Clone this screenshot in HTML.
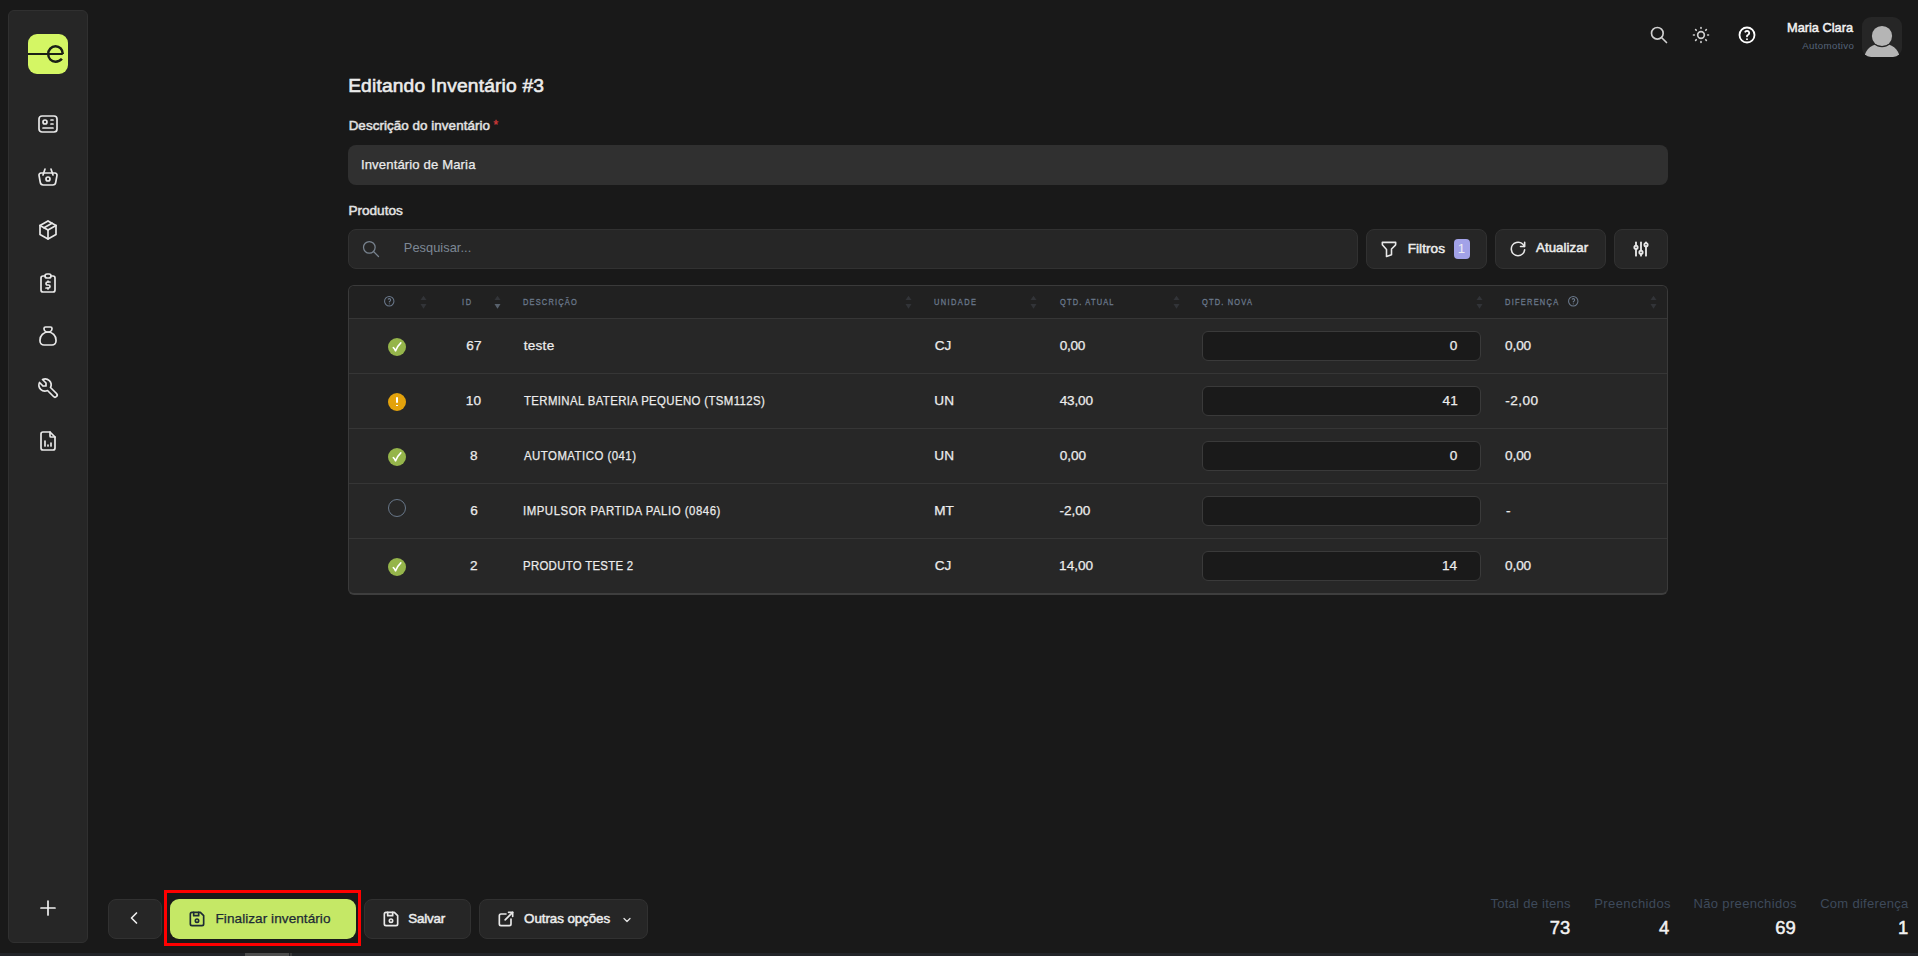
<!DOCTYPE html>
<html><head><meta charset="utf-8">
<style>
*{box-sizing:border-box;margin:0;padding:0}
html,body{width:1918px;height:956px;overflow:hidden;background:#191919;font-family:"Liberation Sans",sans-serif;color:#e6e6e6}
.abs{position:absolute}
svg.t{fill:none;stroke:currentColor;stroke-linecap:round;stroke-linejoin:round}
.txt{white-space:nowrap;line-height:1}
.btn{background:#262626;border:1px solid #313131;border-radius:8px}
</style></head><body>

<div class="abs" style="left:8px;top:10px;width:80px;height:933px;background:#262626;border:1px solid #303030;border-radius:6px"></div>
<div class="abs" style="left:28px;top:34px;width:40px;height:40px;background:#d4f664;border-radius:9px;overflow:hidden">
<svg width="40" height="40" viewBox="0 0 40 40" style="position:absolute;left:0;top:0"><path d="M0 20 H34.8" stroke="#1b2016" stroke-width="2.1" fill="none"/><path d="M34.8 20 C34.8 15.5 31.6 12.3 27.5 12.3 C23.3 12.3 20.2 15.7 20.2 20 C20.2 24.4 23.3 27.7 27.5 27.7 C30.2 27.7 32.4 26.6 33.9 24.8" stroke="#1b2016" stroke-width="2.5" fill="none"/></svg></div>
<svg class="abs t" style="left:36px;top:112px;width:24px;height:24px;color:#e8e8e8;" viewBox="0 0 24 24" stroke-width="1.7"><path d="M3 7a3 3 0 0 1 3 -3h12a3 3 0 0 1 3 3v10a3 3 0 0 1 -3 3h-12a3 3 0 0 1 -3 -3z"/><path d="M7 10a2 2 0 1 0 4 0a2 2 0 1 0 -4 0"/><path d="M15 8l2 0"/><path d="M15 12l2 0"/><path d="M7 16l10 0"/></svg>
<svg class="abs t" style="left:36px;top:165px;width:24px;height:24px;color:#e8e8e8;" viewBox="0 0 24 24" stroke-width="1.7"><path d="M10 14a2 2 0 1 0 4 0a2 2 0 0 0 -4 0"/><path d="M5.001 8h13.999a2 2 0 0 1 1.977 2.304l-1.255 7.152a3 3 0 0 1 -2.966 2.544h-9.512a3 3 0 0 1 -2.965 -2.544l-1.255 -7.152a2 2 0 0 1 1.977 -2.304z"/><path d="M17 10l-2 -6"/><path d="M7 10l2 -6"/></svg>
<svg class="abs t" style="left:36px;top:218px;width:24px;height:24px;color:#e8e8e8;" viewBox="0 0 24 24" stroke-width="1.7"><path d="M12 3l8 4.5l0 9l-8 4.5l-8 -4.5l0 -9l8 -4.5"/><path d="M12 12l8 -4.5"/><path d="M12 12l0 9"/><path d="M12 12l-8 -4.5"/><path d="M16 5.25l-8 4.5"/></svg>
<svg class="abs t" style="left:36px;top:271px;width:24px;height:24px;color:#e8e8e8;" viewBox="0 0 24 24" stroke-width="1.7"><path d="M9 5h-2a2 2 0 0 0 -2 2v12a2 2 0 0 0 2 2h10a2 2 0 0 0 2 -2v-12a2 2 0 0 0 -2 -2h-2"/><path d="M9 5a2 2 0 0 1 2 -2h2a2 2 0 0 1 2 2v0a2 2 0 0 1 -2 2h-2a2 2 0 0 1 -2 -2z"/><path d="M14 11h-2.5a1.5 1.5 0 0 0 0 3h1a1.5 1.5 0 0 1 0 3h-2.5"/><path d="M12 17v1m0 -8v1"/></svg>
<svg class="abs t" style="left:36px;top:324px;width:24px;height:24px;color:#e8e8e8;" viewBox="0 0 24 24" stroke-width="1.7"><path d="M9.5 3h5a1.5 1.5 0 0 1 1.5 1.5a3.5 3.5 0 0 1 -3.5 3.5h-1a3.5 3.5 0 0 1 -3.5 -3.5a1.5 1.5 0 0 1 1.5 -1.5z"/><path d="M4 17v-1a8 8 0 1 1 16 0v1a4 4 0 0 1 -4 4h-8a4 4 0 0 1 -4 -4z"/></svg>
<svg class="abs t" style="left:36px;top:376px;width:24px;height:24px;color:#e8e8e8;" viewBox="0 0 24 24" stroke-width="1.7"><path d="M7 10h3v-3l-3.5 -3.5a6 6 0 0 1 8 8l6 6a2 2 0 0 1 -3 3l-6 -6a6 6 0 0 1 -8 -8l3.5 3.5"/></svg>
<svg class="abs t" style="left:36px;top:429px;width:24px;height:24px;color:#e8e8e8;" viewBox="0 0 24 24" stroke-width="1.7"><path d="M14 3v4a1 1 0 0 0 1 1h4"/><path d="M17 21h-10a2 2 0 0 1 -2 -2v-14a2 2 0 0 1 2 -2h7l5 5v11a2 2 0 0 1 -2 2z"/><path d="M9 17l0 -5"/><path d="M12 17l0 -1"/><path d="M15 17l0 -3"/></svg>
<svg class="abs t" style="left:36px;top:896px;width:24px;height:24px;color:#f0f0f0;" viewBox="0 0 24 24" stroke-width="1.7"><path d="M12 5l0 14"/><path d="M5 12l14 0"/></svg>
<svg class="abs t" style="left:1649px;top:25px;width:20px;height:20px;color:#d0d0d0;" viewBox="0 0 24 24" stroke-width="2"><path d="M3 10a7 7 0 1 0 14 0a7 7 0 1 0 -14 0"/><path d="M21 21l-6 -6"/></svg>
<svg class="abs t" style="left:1691px;top:25px;width:20px;height:20px;color:#d0d0d0;" viewBox="0 0 24 24" stroke-width="2"><path d="M8 12a4 4 0 1 0 8 0a4 4 0 1 0 -8 0"/><path d="M3 12h1m8 -9v1m8 8h1m-9 8v1m-6.4 -15.4l.7 .7m12.1 -.7l-.7 .7m0 11.4l.7 .7m-12.1 -.7l-.7 .7"/></svg>
<svg class="abs t" style="left:1737px;top:25px;width:20px;height:20px;color:#ffffff;" viewBox="0 0 24 24" stroke-width="2.2"><path d="M3 12a9 9 0 1 0 18 0a9 9 0 1 0 -18 0"/><path d="M12 17l0 .01"/><path d="M12 13.5a1.5 1.5 0 0 1 1 -1.5a2.6 2.6 0 1 0 -3 -4"/></svg>
<div class="abs" style="left:1862px;top:17px;width:40px;height:40px;background:#262626;border-radius:9px;overflow:hidden">
<svg width="40" height="40" viewBox="0 0 40 40" style="position:absolute;left:0;top:0"><path d="M2.5 40 C3.5 32 10 26.5 20 26.5 C30 26.5 36.5 32 37.5 40 Z" fill="#b5b5b5"/><circle cx="20" cy="19" r="11.3" fill="#262626"/><circle cx="20" cy="19" r="10.1" fill="#b5b5b5"/></svg></div>
<div class="abs" style="left:348px;top:145px;width:1320px;height:40px;background:#303030;border-radius:8px"></div>
<div class="abs txt" style="left:493.5px;top:119px;font-size:12px;color:#d53b3b;-webkit-text-stroke:0.3px #d53b3b">*</div>
<div class="abs btn" style="left:348px;top:229px;width:1010px;height:40px"></div>
<svg class="abs t" style="left:361px;top:239px;width:20px;height:20px;color:#78838f;" viewBox="0 0 24 24" stroke-width="1.5"><path d="M3 10a7 7 0 1 0 14 0a7 7 0 1 0 -14 0"/><path d="M21 21l-6 -6"/></svg>
<div class="abs btn" style="left:1366px;top:229px;width:121px;height:40px"></div>
<svg class="abs t" style="left:1379px;top:238.8px;width:20px;height:20px;color:#e8e8e8;" viewBox="0 0 24 24" stroke-width="1.9"><path d="M4 4h16v2.172a2 2 0 0 1 -.586 1.414l-4.414 4.414v7l-6 2v-8.5l-4.48 -4.928a2 2 0 0 1 -.52 -1.345v-2.227z"/></svg>
<div class="abs" style="left:1454px;top:239px;width:16px;height:20px;background:#a2a2e8;border-radius:4px"></div>
<div class="abs btn" style="left:1495px;top:229px;width:111px;height:40px"></div>
<svg class="abs t" style="left:1508px;top:238.5px;width:20px;height:20px;color:#e8e8e8;" viewBox="0 0 24 24" stroke-width="1.9"><path d="M19.933 13.041a8 8 0 1 1 -9.925 -8.788c3.899 -1 7.935 1.007 9.425 4.747"/><path d="M20 4v5h-5"/></svg>
<div class="abs btn" style="left:1614px;top:229px;width:54px;height:40px"></div>
<svg class="abs t" style="left:1630.5px;top:239px;width:20px;height:20px;color:#e8e8e8;" viewBox="0 0 24 24" stroke-width="2.2"><path d="M4 10a2 2 0 1 0 4 0a2 2 0 0 0 -4 0"/><path d="M6 4v4"/><path d="M6 12v8"/><path d="M10 16a2 2 0 1 0 4 0a2 2 0 0 0 -4 0"/><path d="M12 4v10"/><path d="M12 18v2"/><path d="M16 7a2 2 0 1 0 4 0a2 2 0 0 0 -4 0"/><path d="M18 4v1"/><path d="M18 9v11"/></svg>
<div class="abs" style="left:348px;top:285px;width:1320px;height:310px;background:#272727;border:1px solid #3a3a3a;border-bottom:2px solid #3e3e3e;border-radius:6px;overflow:hidden"><div class="abs" style="left:0;top:0;width:100%;height:32px;background:#212121"></div></div>
<div class="abs" style="left:349px;top:318px;width:1318px;height:1px;background:#363636"></div>
<div class="abs" style="left:349px;top:373px;width:1318px;height:1px;background:#363636"></div>
<div class="abs" style="left:349px;top:428px;width:1318px;height:1px;background:#363636"></div>
<div class="abs" style="left:349px;top:483px;width:1318px;height:1px;background:#363636"></div>
<div class="abs" style="left:349px;top:538px;width:1318px;height:1px;background:#363636"></div>
<svg class="abs t" style="left:383.25px;top:294.95px;width:12.5px;height:12.5px;color:#6b798c;" viewBox="0 0 24 24" stroke-width="2"><path d="M3 12a9 9 0 1 0 18 0a9 9 0 1 0 -18 0"/><path d="M12 17l0 .01"/><path d="M12 13.5a1.5 1.5 0 0 1 1 -1.5a2.6 2.6 0 1 0 -3 -4"/></svg>
<svg class="abs t" style="left:1567.35px;top:295.25px;width:12.5px;height:12.5px;color:#6b798c;" viewBox="0 0 24 24" stroke-width="2"><path d="M3 12a9 9 0 1 0 18 0a9 9 0 1 0 -18 0"/><path d="M12 17l0 .01"/><path d="M12 13.5a1.5 1.5 0 0 1 1 -1.5a2.6 2.6 0 1 0 -3 -4"/></svg>
<svg class="abs" style="left:419.5px;top:294.5px;width:7px;height:15px" viewBox="0 0 7 15"><path d="M0.5 5 L3.5 0.7 L6.5 5 Z" fill="#323438"/><path d="M0.5 9 L3.5 13.8 L6.5 9 Z" fill="#323438"/></svg>
<svg class="abs" style="left:905.0px;top:294.5px;width:7px;height:15px" viewBox="0 0 7 15"><path d="M0.5 5 L3.5 0.7 L6.5 5 Z" fill="#323438"/><path d="M0.5 9 L3.5 13.8 L6.5 9 Z" fill="#323438"/></svg>
<svg class="abs" style="left:1029.8px;top:294.5px;width:7px;height:15px" viewBox="0 0 7 15"><path d="M0.5 5 L3.5 0.7 L6.5 5 Z" fill="#323438"/><path d="M0.5 9 L3.5 13.8 L6.5 9 Z" fill="#323438"/></svg>
<svg class="abs" style="left:1172.5px;top:294.5px;width:7px;height:15px" viewBox="0 0 7 15"><path d="M0.5 5 L3.5 0.7 L6.5 5 Z" fill="#323438"/><path d="M0.5 9 L3.5 13.8 L6.5 9 Z" fill="#323438"/></svg>
<svg class="abs" style="left:1475.5px;top:294.5px;width:7px;height:15px" viewBox="0 0 7 15"><path d="M0.5 5 L3.5 0.7 L6.5 5 Z" fill="#323438"/><path d="M0.5 9 L3.5 13.8 L6.5 9 Z" fill="#323438"/></svg>
<svg class="abs" style="left:1649.8px;top:294.5px;width:7px;height:15px" viewBox="0 0 7 15"><path d="M0.5 5 L3.5 0.7 L6.5 5 Z" fill="#323438"/><path d="M0.5 9 L3.5 13.8 L6.5 9 Z" fill="#323438"/></svg>
<svg class="abs" style="left:493.5px;top:294.5px;width:7px;height:15px" viewBox="0 0 7 15"><path d="M0.5 5 L3.5 0.7 L6.5 5 Z" fill="#323438"/><path d="M0.5 9 L3.5 13.8 L6.5 9 Z" fill="#58616c"/></svg>
<div class="abs" style="left:388px;top:338px;width:18px;height:18px;border-radius:50%;background:#95b54b"></div>
<svg class="abs" style="left:388px;top:338px;width:18px;height:18px" viewBox="0 0 18 18"><path d="M5.3 9.7 C6.1 10.3 6.8 11.4 7.5 12.9 C8.5 10.1 10.4 7.2 12.8 4.9" stroke="#ffffff" stroke-width="1.6" fill="none" stroke-linecap="round" stroke-linejoin="round"/></svg>
<div class="abs" style="left:1202px;top:331px;width:279px;height:30px;background:#1a1a1a;border:1px solid #3a3a3a;border-radius:6px"></div>
<div class="abs" style="left:388px;top:393px;width:18px;height:18px;border-radius:50%;background:#e3a20c"></div>
<div class="abs" style="left:396.2px;top:397px;width:1.7px;height:6.2px;background:#fff;border-radius:1px"></div>
<div class="abs" style="left:396.2px;top:404.6px;width:1.7px;height:1.8px;background:#fff"></div>
<div class="abs" style="left:1202px;top:386px;width:279px;height:30px;background:#1a1a1a;border:1px solid #3a3a3a;border-radius:6px"></div>
<div class="abs" style="left:388px;top:448px;width:18px;height:18px;border-radius:50%;background:#95b54b"></div>
<svg class="abs" style="left:388px;top:448px;width:18px;height:18px" viewBox="0 0 18 18"><path d="M5.3 9.7 C6.1 10.3 6.8 11.4 7.5 12.9 C8.5 10.1 10.4 7.2 12.8 4.9" stroke="#ffffff" stroke-width="1.6" fill="none" stroke-linecap="round" stroke-linejoin="round"/></svg>
<div class="abs" style="left:1202px;top:441px;width:279px;height:30px;background:#1a1a1a;border:1px solid #3a3a3a;border-radius:6px"></div>
<div class="abs" style="left:388px;top:499px;width:18px;height:18px;border-radius:50%;border:1.3px solid #687789"></div>
<div class="abs" style="left:1202px;top:496px;width:279px;height:30px;background:#1a1a1a;border:1px solid #3a3a3a;border-radius:6px"></div>
<div class="abs" style="left:388px;top:558px;width:18px;height:18px;border-radius:50%;background:#95b54b"></div>
<svg class="abs" style="left:388px;top:558px;width:18px;height:18px" viewBox="0 0 18 18"><path d="M5.3 9.7 C6.1 10.3 6.8 11.4 7.5 12.9 C8.5 10.1 10.4 7.2 12.8 4.9" stroke="#ffffff" stroke-width="1.6" fill="none" stroke-linecap="round" stroke-linejoin="round"/></svg>
<div class="abs" style="left:1202px;top:551px;width:279px;height:30px;background:#1a1a1a;border:1px solid #3a3a3a;border-radius:6px"></div>
<div class="abs btn" style="left:108px;top:899px;width:54px;height:40px"></div>
<svg class="abs t" style="left:124px;top:908px;width:20px;height:20px;color:#eeeeee" viewBox="0 0 24 24" stroke-width="2"><path d="M15 6l-6 6l6 6"/></svg>
<div class="abs" style="left:170px;top:899px;width:186px;height:40px;background:#c5e866;border-radius:9px"></div>
<svg class="abs t" style="left:186.8px;top:908.5px;width:20px;height:20px;color:#1d2a35;" viewBox="0 0 24 24" stroke-width="2"><path d="M6 4h10l4 4v10a2 2 0 0 1 -2 2h-12a2 2 0 0 1 -2 -2v-12a2 2 0 0 1 2 -2"/><path d="M10 14a2 2 0 1 0 4 0a2 2 0 0 0 -4 0"/><path d="M14 4l0 4l-6 0l0 -4"/></svg>
<div class="abs" style="left:163.5px;top:889.5px;width:197px;height:56px;border:3.5px solid #ff0000"></div>
<div class="abs btn" style="left:364px;top:899px;width:107px;height:40px"></div>
<svg class="abs t" style="left:381px;top:908.5px;width:20px;height:20px;color:#e8e8e8;" viewBox="0 0 24 24" stroke-width="2"><path d="M6 4h10l4 4v10a2 2 0 0 1 -2 2h-12a2 2 0 0 1 -2 -2v-12a2 2 0 0 1 2 -2"/><path d="M10 14a2 2 0 1 0 4 0a2 2 0 0 0 -4 0"/><path d="M14 4l0 4l-6 0l0 -4"/></svg>
<div class="abs btn" style="left:479px;top:899px;width:169px;height:40px"></div>
<svg class="abs t" style="left:496px;top:908.5px;width:20px;height:20px;color:#e8e8e8;" viewBox="0 0 24 24" stroke-width="2"><path d="M12 6h-6a2 2 0 0 0 -2 2v10a2 2 0 0 0 2 2h10a2 2 0 0 0 2 -2v-6"/><path d="M11 13l9 -9"/><path d="M15 4h5v5"/></svg>
<svg class="abs t" style="left:620.5px;top:914px;width:12px;height:12px;color:#e4e4e4;" viewBox="0 0 24 24" stroke-width="2.5"><path d="M6 9l6 6l6 -6"/></svg>
<div class="abs" style="left:0;top:953px;width:1918px;height:3px;background:#222428"></div>
<div class="abs" style="left:245px;top:953px;width:44px;height:3px;background:#4d4d4d"></div>
<div class="abs" style="left:290px;top:953px;width:2px;height:3px;background:#3a3a3a"></div>
<div id="t_title" class="abs txt" style="font-size:19.2px;color:#ececec;letter-spacing:0.179px;top:75.65px;-webkit-text-stroke:0.6px #ececec;left:348.13px;">Editando Inventário #3</div>
<div id="t_lbl" class="abs txt" style="font-size:13.4px;color:#e2e2e2;letter-spacing:0.062px;top:119.46px;-webkit-text-stroke:0.5px #e2e2e2;left:348.65px;">Descrição do inventário</div>
<div id="t_inp" class="abs txt" style="font-size:13.1px;color:#ebebeb;letter-spacing:0.133px;top:157.61px;-webkit-text-stroke:0.25px #ebebeb;left:360.95px;">Inventário de Maria</div>
<div id="t_prod" class="abs txt" style="font-size:13.6px;color:#e2e2e2;letter-spacing:-0.001px;top:204.49px;-webkit-text-stroke:0.5px #e2e2e2;left:348.39px;">Produtos</div>
<div id="t_pesq" class="abs txt" style="font-size:12.8px;color:#7d8895;letter-spacing:0.046px;top:241.86px;left:403.87px;">Pesquisar...</div>
<div id="t_filt" class="abs txt" style="font-size:13.6px;color:#ececec;letter-spacing:0.040px;top:241.99px;-webkit-text-stroke:0.5px #ececec;left:1407.73px;">Filtros</div>
<div id="t_badge" class="abs txt" style="font-size:13.2px;color:#ececf4;letter-spacing:0.000px;top:241.72px;left:1457.66px;">1</div>
<div id="t_atual" class="abs txt" style="font-size:13.3px;color:#ececec;letter-spacing:0.057px;top:241.34px;-webkit-text-stroke:0.5px #ececec;left:1535.98px;">Atualizar</div>
<div id="t_name" class="abs txt" style="font-size:13.6px;color:#f2f2f2;letter-spacing:0.000px;top:21.29px;-webkit-text-stroke:0.5px #f2f2f2;transform:scaleX(0.9408);transform-origin:left center;left:1786.73px;">Maria Clara</div>
<div id="t_auto" class="abs txt" style="font-size:9.7px;color:#56647a;letter-spacing:0.366px;top:40.69px;left:1802.18px;">Automotivo</div>
<div id="h_id" class="abs txt" style="font-size:9.3px;color:#6b798c;letter-spacing:2.117px;top:297.53px;-webkit-text-stroke:0.3px #6b798c;transform:scaleX(0.8000);transform-origin:left center;left:462.37px;">ID</div>
<div id="h_desc" class="abs txt" style="font-size:9.3px;color:#6b798c;letter-spacing:1.482px;top:297.53px;-webkit-text-stroke:0.3px #6b798c;transform:scaleX(0.8000);transform-origin:left center;left:523.19px;">DESCRIÇÃO</div>
<div id="h_un" class="abs txt" style="font-size:9.3px;color:#6b798c;letter-spacing:1.749px;top:297.53px;-webkit-text-stroke:0.3px #6b798c;transform:scaleX(0.8000);transform-origin:left center;left:934.40px;">UNIDADE</div>
<div id="h_qa" class="abs txt" style="font-size:9.3px;color:#6b798c;letter-spacing:1.480px;top:297.53px;-webkit-text-stroke:0.3px #6b798c;transform:scaleX(0.8000);transform-origin:left center;left:1059.70px;">QTD. ATUAL</div>
<div id="h_qn" class="abs txt" style="font-size:9.3px;color:#6b798c;letter-spacing:1.494px;top:297.53px;-webkit-text-stroke:0.3px #6b798c;transform:scaleX(0.8000);transform-origin:left center;left:1201.76px;">QTD. NOVA</div>
<div id="h_dif" class="abs txt" style="font-size:9.3px;color:#6b798c;letter-spacing:1.582px;top:297.53px;-webkit-text-stroke:0.3px #6b798c;transform:scaleX(0.8000);transform-origin:left center;left:1505.01px;">DIFERENÇA</div>
<div id="r0_id" class="abs txt" style="font-size:13.6px;color:#ececec;letter-spacing:0.000px;top:338.59px;-webkit-text-stroke:0.25px #ececec;left:466.37px;">67</div>
<div id="r0_desc" class="abs txt" style="font-size:13.6px;color:#ececec;letter-spacing:0.281px;top:338.59px;-webkit-text-stroke:0.25px #ececec;left:523.63px;">teste</div>
<div id="r0_un" class="abs txt" style="font-size:13.6px;color:#ececec;letter-spacing:0.000px;top:338.59px;-webkit-text-stroke:0.25px #ececec;left:934.65px;">CJ</div>
<div id="r0_qa" class="abs txt" style="font-size:13.6px;color:#ececec;letter-spacing:-0.240px;top:338.59px;-webkit-text-stroke:0.25px #ececec;left:1059.63px;">0,00</div>
<div id="r0_qn" class="abs txt" style="font-size:13.6px;color:#ececec;letter-spacing:0.000px;top:338.59px;-webkit-text-stroke:0.25px #ececec;right:460.78px;">0</div>
<div id="r0_dif" class="abs txt" style="font-size:13.6px;color:#ececec;letter-spacing:-0.156px;top:338.59px;-webkit-text-stroke:0.25px #ececec;left:1505.11px;">0,00</div>
<div id="r1_id" class="abs txt" style="font-size:13.6px;color:#ececec;letter-spacing:0.000px;top:393.59px;-webkit-text-stroke:0.25px #ececec;left:465.85px;">10</div>
<div id="r1_desc" class="abs txt" style="font-size:13.6px;color:#ececec;letter-spacing:0.428px;top:393.59px;-webkit-text-stroke:0.25px #ececec;transform:scaleX(0.8400);transform-origin:left center;left:523.68px;">TERMINAL BATERIA PEQUENO (TSM112S)</div>
<div id="r1_un" class="abs txt" style="font-size:13.6px;color:#ececec;letter-spacing:0.000px;top:393.59px;-webkit-text-stroke:0.25px #ececec;left:934.33px;">UN</div>
<div id="r1_qa" class="abs txt" style="font-size:13.6px;color:#ececec;letter-spacing:-0.196px;top:393.59px;-webkit-text-stroke:0.25px #ececec;left:1059.76px;">43,00</div>
<div id="r1_qn" class="abs txt" style="font-size:13.6px;color:#ececec;letter-spacing:0.000px;top:393.59px;-webkit-text-stroke:0.25px #ececec;right:460.29px;">41</div>
<div id="r1_dif" class="abs txt" style="font-size:13.6px;color:#ececec;letter-spacing:0.478px;top:393.59px;-webkit-text-stroke:0.25px #ececec;left:1505.13px;">-2,00</div>
<div id="r2_id" class="abs txt" style="font-size:13.6px;color:#ececec;letter-spacing:0.000px;top:448.59px;-webkit-text-stroke:0.25px #ececec;left:469.94px;">8</div>
<div id="r2_desc" class="abs txt" style="font-size:13.6px;color:#ececec;letter-spacing:0.559px;top:448.59px;-webkit-text-stroke:0.25px #ececec;transform:scaleX(0.8400);transform-origin:left center;left:523.68px;">AUTOMATICO (041)</div>
<div id="r2_un" class="abs txt" style="font-size:13.6px;color:#ececec;letter-spacing:0.000px;top:448.59px;-webkit-text-stroke:0.25px #ececec;left:934.33px;">UN</div>
<div id="r2_qa" class="abs txt" style="font-size:13.6px;color:#ececec;letter-spacing:0.000px;top:448.59px;-webkit-text-stroke:0.25px #ececec;left:1059.63px;">0,00</div>
<div id="r2_qn" class="abs txt" style="font-size:13.6px;color:#ececec;letter-spacing:0.000px;top:448.59px;-webkit-text-stroke:0.25px #ececec;right:460.78px;">0</div>
<div id="r2_dif" class="abs txt" style="font-size:13.6px;color:#ececec;letter-spacing:-0.156px;top:448.59px;-webkit-text-stroke:0.25px #ececec;left:1505.11px;">0,00</div>
<div id="r3_id" class="abs txt" style="font-size:13.6px;color:#ececec;letter-spacing:0.000px;top:503.59px;-webkit-text-stroke:0.25px #ececec;left:470.19px;">6</div>
<div id="r3_desc" class="abs txt" style="font-size:13.6px;color:#ececec;letter-spacing:0.620px;top:503.59px;-webkit-text-stroke:0.25px #ececec;transform:scaleX(0.8400);transform-origin:left center;left:522.95px;">IMPULSOR PARTIDA PALIO (0846)</div>
<div id="r3_un" class="abs txt" style="font-size:13.6px;color:#ececec;letter-spacing:0.000px;top:503.59px;-webkit-text-stroke:0.25px #ececec;left:934.13px;">MT</div>
<div id="r3_qa" class="abs txt" style="font-size:13.6px;color:#ececec;letter-spacing:0.000px;top:503.59px;-webkit-text-stroke:0.25px #ececec;left:1059.41px;">-2,00</div>
<div id="r3_dif" class="abs txt" style="font-size:13.6px;color:#ececec;letter-spacing:0.000px;top:503.59px;-webkit-text-stroke:0.25px #ececec;left:1505.89px;">-</div>
<div id="r4_id" class="abs txt" style="font-size:13.6px;color:#ececec;letter-spacing:0.000px;top:558.59px;-webkit-text-stroke:0.25px #ececec;left:470.12px;">2</div>
<div id="r4_desc" class="abs txt" style="font-size:13.6px;color:#ececec;letter-spacing:0.343px;top:558.59px;-webkit-text-stroke:0.25px #ececec;transform:scaleX(0.8400);transform-origin:left center;left:522.72px;">PRODUTO TESTE 2</div>
<div id="r4_un" class="abs txt" style="font-size:13.6px;color:#ececec;letter-spacing:0.000px;top:558.59px;-webkit-text-stroke:0.25px #ececec;left:934.65px;">CJ</div>
<div id="r4_qa" class="abs txt" style="font-size:13.6px;color:#ececec;letter-spacing:0.000px;top:558.59px;-webkit-text-stroke:0.25px #ececec;left:1059.08px;">14,00</div>
<div id="r4_qn" class="abs txt" style="font-size:13.6px;color:#ececec;letter-spacing:0.000px;top:558.59px;-webkit-text-stroke:0.25px #ececec;right:461.01px;">14</div>
<div id="r4_dif" class="abs txt" style="font-size:13.6px;color:#ececec;letter-spacing:-0.156px;top:558.59px;-webkit-text-stroke:0.25px #ececec;left:1505.11px;">0,00</div>
<div id="b_fin" class="abs txt" style="font-size:13.6px;color:#1d2a35;letter-spacing:0.046px;top:911.69px;-webkit-text-stroke:0.25px #1d2a35;left:215.52px;">Finalizar inventário</div>
<div id="b_sal" class="abs txt" style="font-size:13.4px;color:#ececec;letter-spacing:-0.211px;top:911.86px;-webkit-text-stroke:0.5px #ececec;left:408.37px;">Salvar</div>
<div id="b_out" class="abs txt" style="font-size:13.4px;color:#ececec;letter-spacing:-0.090px;top:911.86px;-webkit-text-stroke:0.5px #ececec;left:524.11px;">Outras opções</div>
<div id="s_lab0" class="abs txt" style="font-size:13.0px;color:#3e4a5b;letter-spacing:0.273px;top:896.79px;right:347.15px;">Total de itens</div>
<div id="s_num0" class="abs txt" style="font-size:18.4px;color:#f2f2f2;letter-spacing:0.000px;top:918.82px;-webkit-text-stroke:0.5px #f2f2f2;right:347.83px;">73</div>
<div id="s_lab1" class="abs txt" style="font-size:13.0px;color:#3e4a5b;letter-spacing:0.404px;top:896.79px;right:247.03px;">Preenchidos</div>
<div id="s_num1" class="abs txt" style="font-size:18.4px;color:#f2f2f2;letter-spacing:0.000px;top:918.82px;-webkit-text-stroke:0.5px #f2f2f2;right:248.77px;">4</div>
<div id="s_lab2" class="abs txt" style="font-size:13.0px;color:#3e4a5b;letter-spacing:0.334px;top:896.79px;right:121.15px;">Não preenchidos</div>
<div id="s_num2" class="abs txt" style="font-size:18.4px;color:#f2f2f2;letter-spacing:0.000px;top:918.82px;-webkit-text-stroke:0.5px #f2f2f2;right:122.37px;">69</div>
<div id="s_lab3" class="abs txt" style="font-size:13.0px;color:#3e4a5b;letter-spacing:0.300px;top:896.79px;right:9.43px;">Com diferença</div>
<div id="s_num3" class="abs txt" style="font-size:18.4px;color:#f2f2f2;letter-spacing:0.000px;top:918.82px;-webkit-text-stroke:0.5px #f2f2f2;right:9.85px;">1</div>
</body></html>
